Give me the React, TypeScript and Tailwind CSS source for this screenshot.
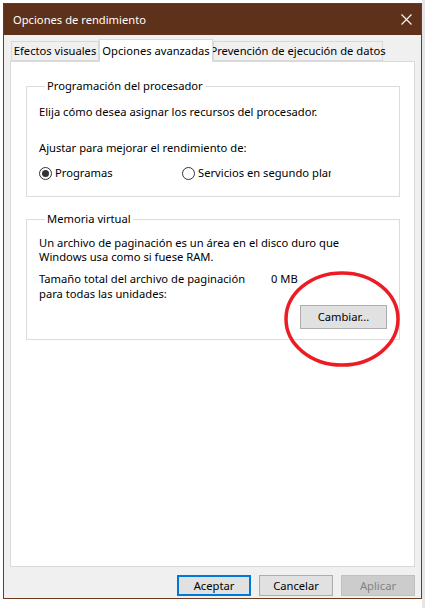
import React from "react"

// Windows-style "Opciones de rendimiento" dialog

function Radio({ checked, label }: { checked?: boolean; label: string }) {
  return (
    <div className="flex items-center h-[16px] whitespace-nowrap">
      <span className="w-[13px] h-[13px] rounded-full border border-[#333333] bg-white flex items-center justify-center shrink-0">
        {checked && <span className="w-[7px] h-[7px] rounded-full bg-[#333333]" />}
      </span>
      <span className="ml-[3px]">{label}</span>
    </div>
  )
}

function Tab({ label, active, width }: { label: string; active?: boolean; width: string }) {
  return (
    <div
      className={`${width} flex items-center justify-center border border-[#d9d9d9] whitespace-nowrap ${
        active ? "h-[23px] bg-white border-b-0 relative z-10 -mb-px" : "h-[20px] bg-[#f0f0f0]"
      }`}
    >
      {label}
    </div>
  )
}

function WinButton({ label, variant }: { label: string; variant?: "default" | "disabled" }) {
  const cls =
    variant === "default"
      ? "border-2 border-[#0078d7] bg-[#e1e1e1] text-black"
      : variant === "disabled"
      ? "border border-[#bfbfbf] bg-[#cccccc] text-[#838383]"
      : "border border-[#adadad] bg-[#e1e1e1] text-black"
  return (
    <button className={`w-[74px] h-[21px] flex items-center justify-center ${cls}`}>{label}</button>
  )
}

export default function App() {
  return (
    <div className="w-[425px] h-[608px] bg-white relative overflow-hidden flex font-['Noto_Sans',sans-serif] text-[11.2px] leading-[16px] text-black">
      <div className="w-[3px] shrink-0" />
      <div className="mt-[3px] w-[419px] h-[596px] shrink-0 border border-[#6b3a20] flex flex-col">
        {/* Title bar */}
        <div className="h-[31px] bg-[#5e311a] flex items-center justify-between pl-[9px] pr-[9px] text-white">
          <span>Opciones de rendimiento</span>
          <svg width="11" height="11" viewBox="0 0 11 11">
            <path d="M0.5 0.5 L10.5 10.5 M10.5 0.5 L0.5 10.5" stroke="#ffffff" strokeWidth="1.1" />
          </svg>
        </div>

        <div className="flex-1 bg-[#f0f0f0] flex flex-col px-[6px] pt-[4px]">
          {/* Tabs */}
          <div className="flex items-end pl-[1px]">
            <Tab label="Efectos visuales" width="w-[88px]" />
            <Tab label="Opciones avanzadas" width="w-[114px]" active />
            <Tab label="Prevención de ejecución de datos" width="w-[170px]" />
          </div>

          {/* Tab panel */}
          <div className="h-[506px] border border-[#d9d9d9] bg-white pt-[16px]">
            <fieldset className="mx-[15px] w-[374px] border border-[#dcdcdc] pl-[12px] pt-[10px] pb-[15px]">
              <legend className="ml-[6px] px-[2px]">Programación del procesador</legend>
              <div className="whitespace-nowrap">Elija cómo desea asignar los recursos del procesador.</div>
              <div className="mt-[20px] whitespace-nowrap">Ajustar para mejorar el rendimiento de:</div>
              <div className="mt-[9px] flex">
                <div className="w-[143px]">
                  <Radio checked label="Programas" />
                </div>
                <div className="w-[149px] overflow-hidden">
                  <Radio label="Servicios en segundo plano" />
                </div>
              </div>
            </fieldset>

            <fieldset className="mt-[14px] mx-[15px] w-[374px] border border-[#dcdcdc] pl-[12px] pr-[12px] pt-[9px] pb-[10px]">
              <legend className="ml-[6px] px-[2px]">Memoria virtual</legend>
              <div className="leading-[14px] whitespace-nowrap">
                Un archivo de paginación es un área en el disco duro que
                <br />
                Windows usa como si fuese RAM.
              </div>
              <div className="mt-[7px] flex leading-[15px] whitespace-nowrap">
                <div className="w-[232px]">
                  Tamaño total del archivo de paginación
                  <br />
                  para todas las unidades:
                </div>
                <div>0 MB</div>
              </div>
              <div className="mt-[4px] flex justify-end">
                <button className="w-[87px] h-[24px] border border-[#adadad] bg-[#e1e1e1] flex items-center justify-center">
                  Cambiar...
                </button>
              </div>
            </fieldset>
          </div>

          {/* Dialog buttons */}
          <div className="mt-[8px] flex justify-end gap-[8px]">
            <WinButton label="Aceptar" variant="default" />
            <WinButton label="Cancelar" />
            <WinButton label="Aplicar" variant="disabled" />
          </div>
        </div>
      </div>
      <div className="flex-1 bg-[#e6e6e6]" />

      {/* Red hand-drawn circle annotation */}
      <svg className="absolute left-0 top-0 pointer-events-none" width="425" height="608">
        <ellipse cx="342" cy="319" rx="56" ry="46" fill="none" stroke="#ed1c24" strokeWidth="3.5" />
      </svg>
    </div>
  )
}
